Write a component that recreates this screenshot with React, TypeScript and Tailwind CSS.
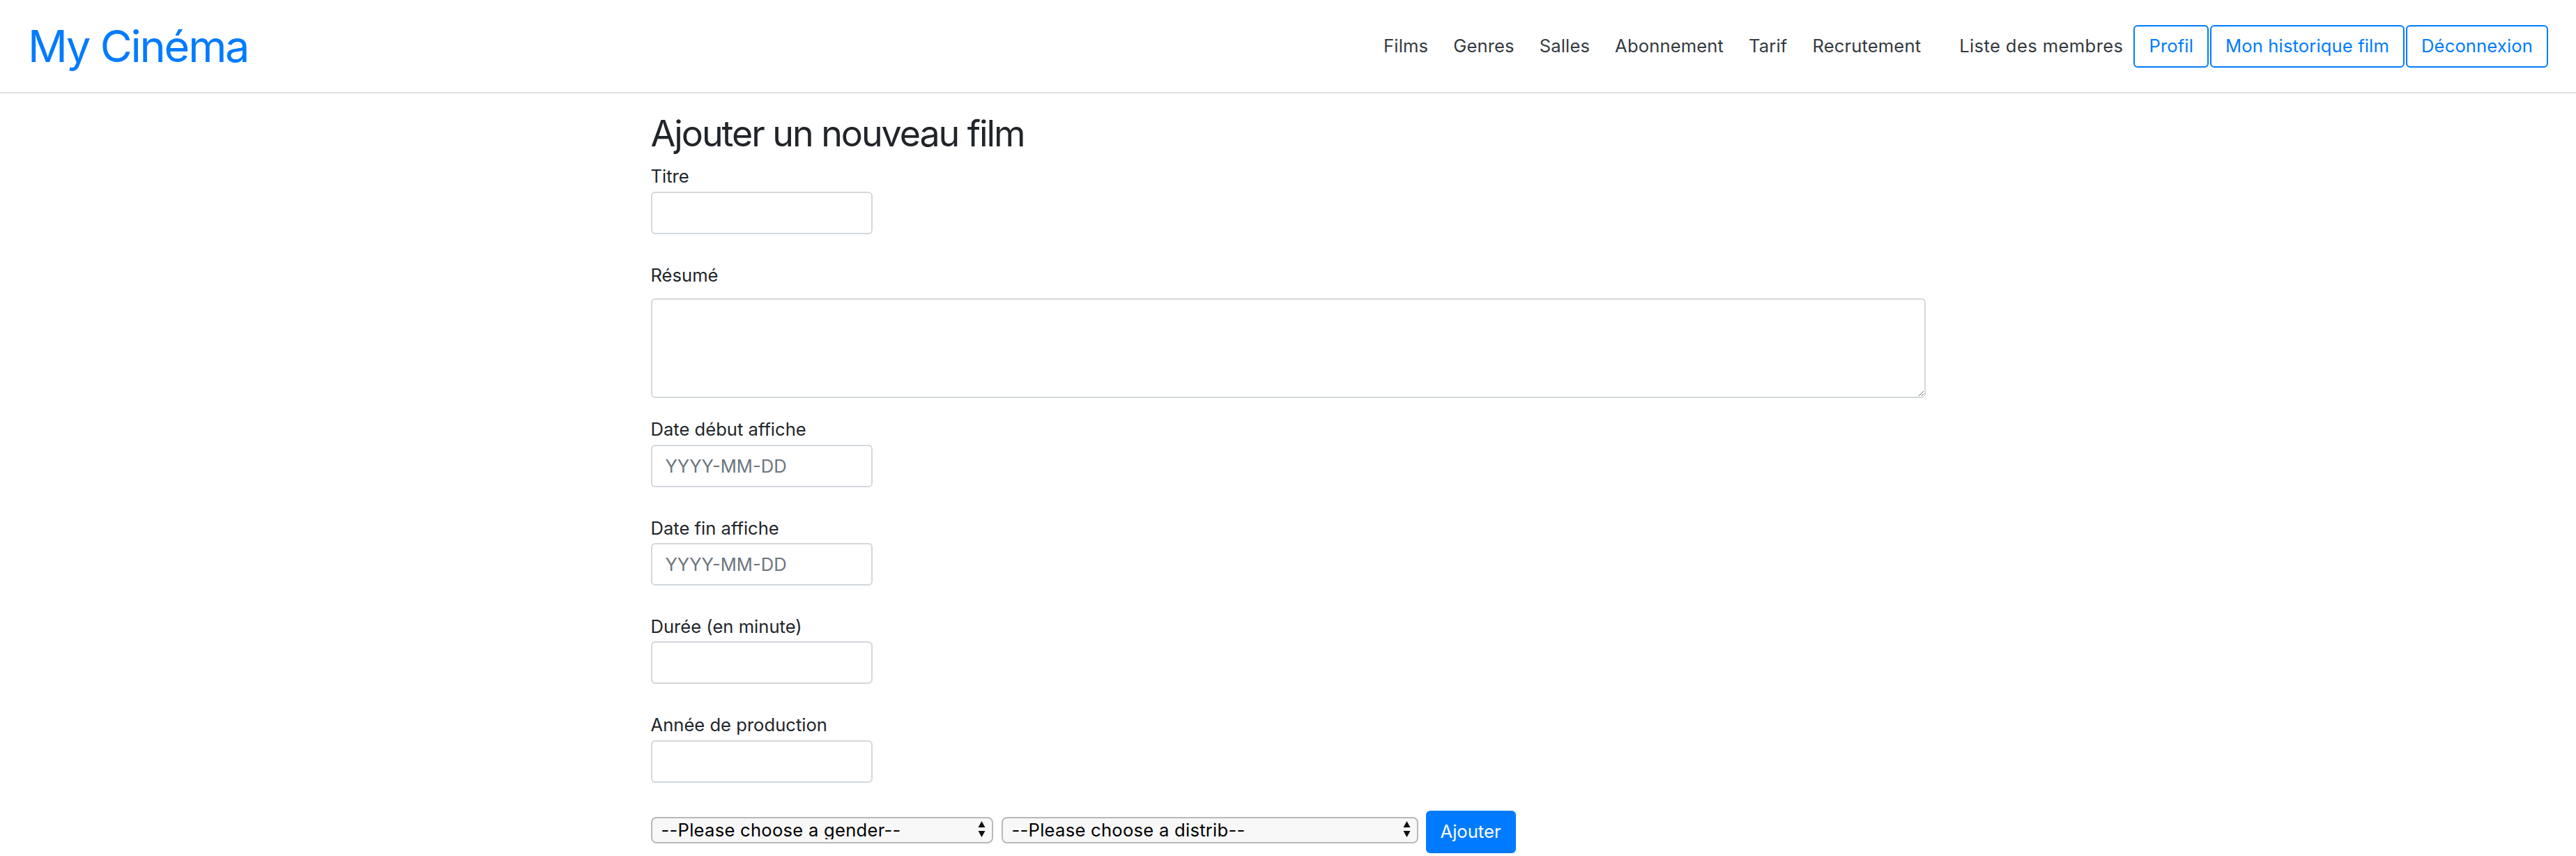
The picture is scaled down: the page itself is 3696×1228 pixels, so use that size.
import React from "react";

const navLinks = ["Films", "Genres", "Salles", "Abonnement", "Tarif", "Recrutement"];
const navButtons = ["Profil", "Mon historique film", "Déconnexion"];

function Field({ label, placeholder }: { label: string; placeholder?: string }) {
  return (
    <div className="mb-[40px]">
      <label className="block text-[25.6px] leading-[38.4px]">{label}</label>
      <input
        type="text"
        placeholder={placeholder}
        className="mt-[2px] block h-[61px] w-[318px] rounded-[6px] border-2 border-[#d3d8dd] bg-white px-[19px] text-[25.6px] text-[#495057] outline-none placeholder:text-[#6c757d]"
      />
    </div>
  );
}

function Select({ text, width }: { text: string; width: string }) {
  return (
    <div className={`relative mb-[14px] ${width}`}>
      <select className="block h-[38px] w-full appearance-none rounded-[8px] border-2 border-[#b9b9b9] bg-[#f8f8f8] pl-[13px] text-[25.6px] leading-none tracking-[0.01em] text-black outline-none">
        <option>{text}</option>
      </select>
      <svg
        className="pointer-events-none absolute right-[11px] top-[5px] h-[26px] w-[11px]"
        viewBox="0 0 11 26"
        aria-hidden="true"
      >
        <path d="M5.5 1 L10.5 10 L0.5 10 Z" fill="#111" />
        <path d="M0.5 15 L10.5 15 L5.5 24 Z" fill="#111" />
      </svg>
    </div>
  );
}

export default function App() {
  return (
    <div className="min-h-screen bg-white font-[Inter,sans-serif] text-[#212529]">
      <nav className="flex h-[134px] items-center border-b-2 border-[#dee2e6] px-[40px]">
        <a href="#" className="text-[63px] leading-none tracking-[-0.035em] text-[#007bff]">
          My Cinéma
        </a>
        <div className="ml-auto flex items-center text-[25.6px] tracking-[0.005em] text-[#343a40]">
          <div className="flex items-center gap-[36px]">
            {navLinks.map((item) => (
              <a key={item} href="#">
                {item}
              </a>
            ))}
          </div>
          <a href="#" className="ml-[55px] tracking-[0.015em]">
            Liste des membres
          </a>
          <div className="ml-[15px] flex items-center gap-[2px]">
            {navButtons.map((item) => (
              <button
                key={item}
                className="h-[61px] rounded-[6px] border-2 border-[#007bff] px-[20px] text-[25.6px] text-[#007bff]"
              >
                {item}
              </button>
            ))}
          </div>
        </div>
      </nav>

      <main className="mx-auto w-[1829px] pt-[27px]">
        <h2 className="text-[52px] leading-[1.2] tracking-[-0.04em]">Ajouter un nouveau film</h2>
        <form className="mt-[11px]">
          <Field label="Titre" />

          <div className="mb-[26px]">
            <label className="block text-[25.6px] leading-[38.4px]">Résumé</label>
            <textarea className="mt-[14px] block h-[143px] w-full rounded-[6px] border-2 border-[#d3d8dd] bg-white px-[19px] text-[25.6px] outline-none" />
          </div>

          <Field label="Date début affiche" placeholder="YYYY-MM-DD" />
          <Field label="Date fin affiche" placeholder="YYYY-MM-DD" />
          <Field label="Durée (en minute)" />
          <Field label="Année de production" />

          <div className="flex items-end">
            <Select text="--Please choose a gender--" width="w-[491px]" />
            <Select text="--Please choose a distrib--" width="ml-[12px] w-[598px]" />
            <button
              type="button"
              className="ml-[11px] h-[61px] rounded-[6px] border-2 border-[#007bff] bg-[#007bff] px-[19px] text-[25.6px] text-white"
            >
              Ajouter
            </button>
          </div>
        </form>
      </main>
    </div>
  );
}
